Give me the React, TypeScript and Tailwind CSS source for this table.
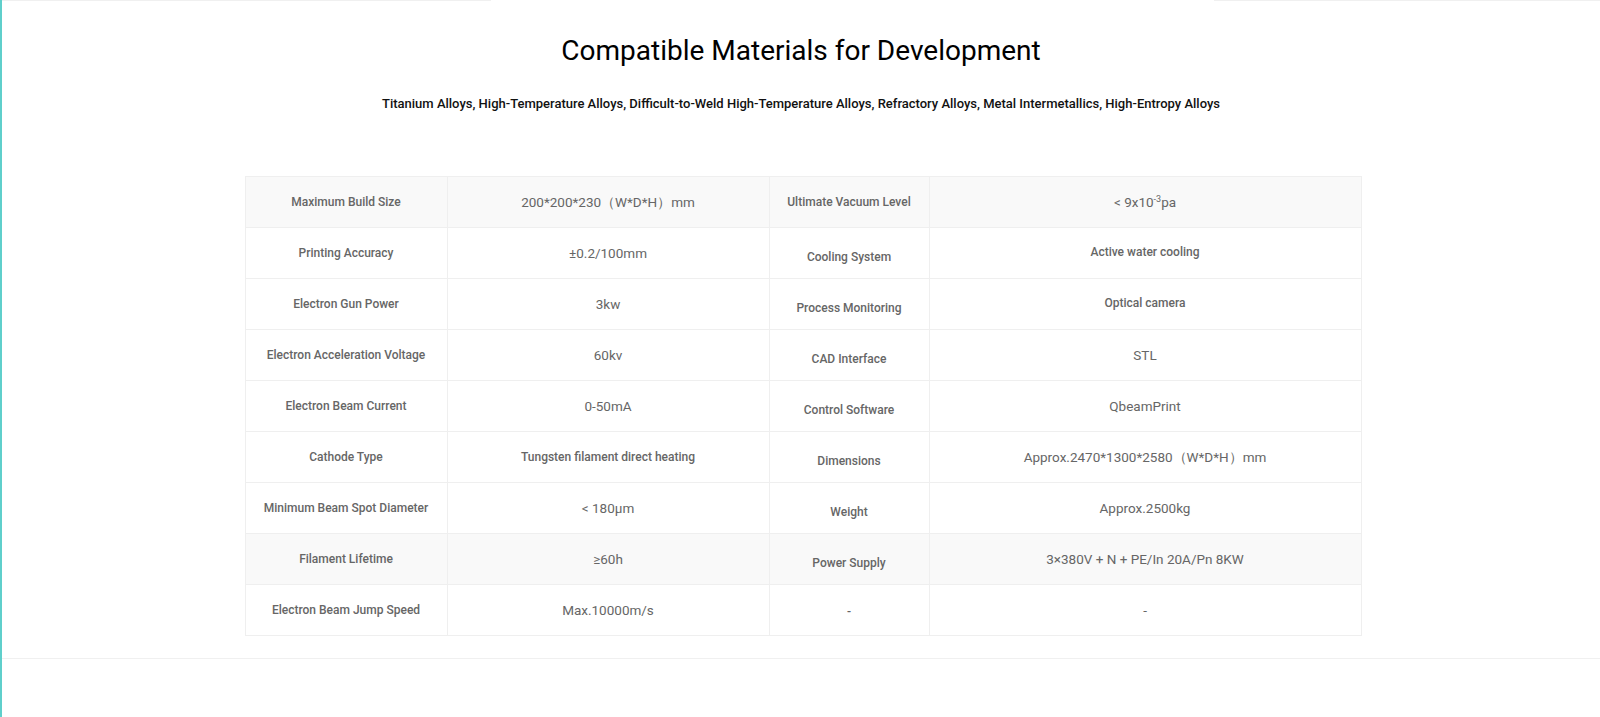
import React from "react";

type Row = {
  label: string;
  value: React.ReactNode;
  label2: string;
  value2: React.ReactNode;
  small?: boolean;
  small2?: boolean;
  shade?: boolean;
};

const rows: Row[] = [
  {
    label: "Maximum Build Size",
    value: "200*200*230（W*D*H）mm",
    label2: "Ultimate Vacuum Level",
    value2: (
      <>
        &lt; 9x10<sup className="text-[9px]">-3</sup>pa
      </>
    ),
    shade: true,
  },
  { label: "Printing Accuracy", value: "±0.2/100mm", label2: "Cooling System", value2: "Active water cooling", small2: true },
  { label: "Electron Gun Power", value: "3kw", label2: "Process Monitoring", value2: "Optical camera", small2: true },
  { label: "Electron Acceleration Voltage", value: "60kv", label2: "CAD Interface", value2: "STL" },
  { label: "Electron Beam Current", value: "0-50mA", label2: "Control Software", value2: "QbeamPrint" },
  {
    label: "Cathode Type",
    value: "Tungsten filament direct heating",
    small: true,
    label2: "Dimensions",
    value2: "Approx.2470*1300*2580（W*D*H）mm",
  },
  { label: "Minimum Beam Spot Diameter", value: "< 180μm", label2: "Weight", value2: "Approx.2500kg" },
  { label: "Filament Lifetime", value: "≥60h", label2: "Power Supply", value2: "3×380V + N + PE/In 20A/Pn 8KW", shade: true },
  { label: "Electron Beam Jump Speed", value: "Max.10000m/s", label2: "-", value2: "-" },
];

const labelCls = "text-[12px] font-medium text-[#666]";
const valueCls = "text-[13.5px] font-normal text-[#666]";

export default function App() {
  return (
    <div className="relative min-h-screen border-l-2 border-[#5fcfcb] bg-white font-['Roboto','Liberation_Sans',sans-serif]">
      <div className="flex h-px">
        <div className="w-[489px] bg-[#f0f0f0]" />
        <div className="flex-1" />
        <div className="w-[386px] bg-[#f0f0f0]" />
      </div>

      <h1 className="pt-[32px] text-center text-[28px] leading-[36px] text-black">Compatible Materials for Development</h1>
      <p className="mt-[25px] text-center text-[13px] font-medium leading-[20px] text-[#111]">
        Titanium Alloys, High-Temperature Alloys, Difficult-to-Weld High-Temperature Alloys, Refractory Alloys, Metal Intermetallics, High-Entropy Alloys
      </p>

      <div className="mt-[62px] flex justify-center pl-[4px]">
        <table className="w-[1116px] table-fixed border-collapse border border-[#efefef] text-center">
          <colgroup>
            <col className="w-[202px]" />
            <col className="w-[322px]" />
            <col className="w-[160px]" />
            <col className="w-[432px]" />
          </colgroup>
          <tbody>
            {rows.map((r) => (
              <tr key={r.label} className={r.shade ? "h-[51px] bg-[#f9f9f9]" : "h-[51px] bg-white"}>
                <td className={`border border-[#efefef] ${labelCls}`}>{r.label}</td>
                <td className={`border border-[#efefef] ${r.small ? labelCls : valueCls}`}>{r.value}</td>
                <td
                  className={`border border-[#efefef] ${labelCls} ${
                    r.label2.startsWith("U") ? "" : r.label2 === "-" ? "pt-[4px]" : "pt-[8px]"
                  }`}
                >
                  {r.label2}
                </td>
                <td className={`border border-[#efefef] ${r.small2 ? `${labelCls} pb-[3px]` : valueCls}`}>{r.value2}</td>
              </tr>
            ))}
          </tbody>
        </table>
      </div>

      <div className="mt-[22px] h-px bg-[#f0f0f0]" />
    </div>
  );
}
